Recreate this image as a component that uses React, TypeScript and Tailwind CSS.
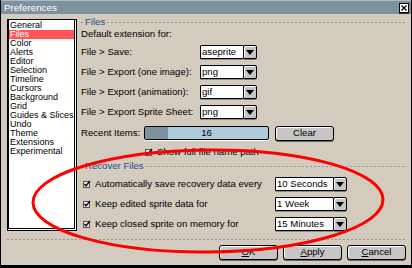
import React from "react";

const sidebarItems = [
  "General",
  "Files",
  "Color",
  "Alerts",
  "Editor",
  "Selection",
  "Timeline",
  "Cursors",
  "Background",
  "Grid",
  "Guides & Slices",
  "Undo",
  "Theme",
  "Extensions",
  "Experimental",
];

function Dashed({ className = "" }: { className?: string }) {
  return (
    <div
      className={`h-px bg-[repeating-linear-gradient(90deg,#9e948c_0_2px,transparent_2px_4px)] ${className}`}
    />
  );
}

function Header({ title }: { title: string }) {
  return (
    <div className="flex h-[10px] items-center">
      <Dashed className="w-[3px]" />
      <span className="ml-px text-[9.6px] leading-[10px] text-[#2c4c91]">{title}</span>
      <Dashed className="ml-[2px] flex-1" />
    </div>
  );
}

function Arrow() {
  return (
    <div className="-ml-px flex h-[14px] w-[14px] items-center justify-center rounded-[2px] border border-black bg-[#c6c6c6] shadow-[inset_1px_1px_0_#fff,0_1px_0_#777]">
      <svg width="8" height="5" viewBox="0 0 8 5">
        <polygon points="0,0 8,0 4,5" fill="#000" />
      </svg>
    </div>
  );
}

function Dropdown({ value, width }: { value: string; width: string }) {
  return (
    <div className="flex h-[14px]">
      <div
        className={`${width} h-[14px] rounded-[1px] border border-black bg-white pl-px text-[9.6px] leading-[12px] shadow-[0_1px_0_#8c8c8c]`}
      >
        {value}
      </div>
      <Arrow />
    </div>
  );
}

function Check() {
  return (
    <svg width="8" height="8" viewBox="0 0 8 8" className="shrink-0">
      <rect x="0.5" y="1.5" width="6" height="6" fill="#eee" stroke="#555" />
      <path d="M1.5 4 L3 5.8 L7 1" stroke="#111" strokeWidth="1.4" fill="none" />
    </svg>
  );
}

function Button({ children, className = "" }: { children: React.ReactNode; className?: string }) {
  return (
    <div
      className={`flex items-center justify-center rounded-[3px] border border-black bg-[#c6c6c6] text-[9.6px] shadow-[inset_1px_1px_0_#fff,0_1px_0_#666] ${className}`}
    >
      {children}
    </div>
  );
}

function FileRow({ label, value }: { label: string; value: string }) {
  return (
    <div className="flex h-[14px] items-center">
      <span className="w-[119px] text-[9.6px]">{label}</span>
      <Dropdown value={value} width="w-[44px]" />
    </div>
  );
}

function RecoverRow({ label, value }: { label: string; value: string }) {
  return (
    <div className="flex h-[14px] items-center">
      <div className="flex w-[194px] items-center pl-[2px]">
        <Check />
        <span className="ml-[4px] text-[9.6px]">{label}</span>
      </div>
      <Dropdown value={value} width="w-[59px]" />
    </div>
  );
}

export default function App() {
  return (
    <div className="relative h-[268px] w-[412px] overflow-hidden border-x border-b-[3px] border-black bg-[#d3cbbe] font-['Liberation_Sans',Arial,sans-serif] text-black">
      <div className="flex h-[14px] items-center justify-between border-t border-[#a9bcc7] bg-[#7d929e] pl-[3px] pr-[2px]">
        <span className="text-[9.8px] leading-[12px] text-white">Preferences</span>
        <div className="flex h-[10px] w-[10px] items-center justify-center border border-black bg-white shadow-[0_1px_0_#333]">
          <svg width="6" height="6" viewBox="0 0 6 6">
            <path d="M0.5 0.5 L5.5 5.5 M5.5 0.5 L0.5 5.5" stroke="#000" strokeWidth="1.2" />
          </svg>
        </div>
      </div>

      <div className="flex pl-[6px] pr-[4px]">
        <div className="mt-[5px] h-[212px] w-[70px] border border-black bg-white pb-px pr-px">
          <div className="h-full border-x border-b border-black pt-px">
            {sidebarItems.map((item) => (
              <div
                key={item}
                className={`h-[9px] whitespace-nowrap pl-px text-[9px] leading-[9px] ${
                  item === "Files" ? "bg-[#ff5555] text-white" : ""
                }`}
              >
                {item}
              </div>
            ))}
          </div>
        </div>

        <div className="ml-[4px] mt-[3px] flex flex-1 flex-col">
          <Header title="Files" />
          <div className="mt-[2px] h-[10px] text-[9.6px] leading-[10px]">Default extension for:</div>
          <div className="mt-[6px] flex flex-col gap-[6px]">
            <FileRow label="File > Save:" value="aseprite" />
            <FileRow label="File > Export (one image):" value="png" />
            <FileRow label="File > Export (animation):" value="gif" />
            <FileRow label="File > Export Sprite Sheet:" value="png" />
          </div>

          <div className="mt-[7px] flex h-[14px] items-center">
            <span className="w-[63px] text-[9.6px]">Recent Items:</span>
            <div className="relative h-[14px] w-[125px] overflow-hidden rounded-[2px] border border-black bg-[#aecadb] shadow-[0_1px_0_#fff]">
              <div className="h-full w-[23px] bg-[#7d929e]" />
              <span className="absolute inset-0 text-center text-[9.6px] leading-[12px]">16</span>
            </div>
            <Button className="ml-[6px] h-[15px] w-[59px]">Clear</Button>
          </div>

          <div className="mt-[7px] flex h-[10px] items-center pl-[64px]">
            <Check />
            <span className="ml-[4px] text-[9.6px]">Show full file name path</span>
          </div>

          <div className="mt-[4px]">
            <Header title="Recover Files" />
          </div>
          <div className="mt-[6px] flex flex-col gap-[6px]">
            <RecoverRow label="Automatically save recovery data every" value="10 Seconds" />
            <RecoverRow label="Keep edited sprite data for" value="1 Week" />
            <RecoverRow label="Keep closed sprite on memory for" value="15 Minutes" />
          </div>
        </div>
      </div>

      <Dashed className="ml-[6px] mr-[4px] mt-[8px]" />
      <div className="mt-[5px] flex justify-end gap-[5px] pr-[5px]">
        <Button className="h-[15px] w-[59px]">
          <span className="underline">O</span>K
        </Button>
        <Button className="h-[15px] w-[59px]">
          <span className="underline">A</span>pply
        </Button>
        <Button className="h-[15px] w-[59px]">
          <span className="underline">C</span>ancel
        </Button>
      </div>

      <svg
        className="pointer-events-none absolute left-0 top-0"
        width="412"
        height="268"
        viewBox="0 0 412 268"
      >
        <ellipse cx="207" cy="201" rx="175" ry="51" fill="none" stroke="#ff0000" strokeWidth="3" transform="rotate(-0.5 207 201)" />
      </svg>
    </div>
  );
}
